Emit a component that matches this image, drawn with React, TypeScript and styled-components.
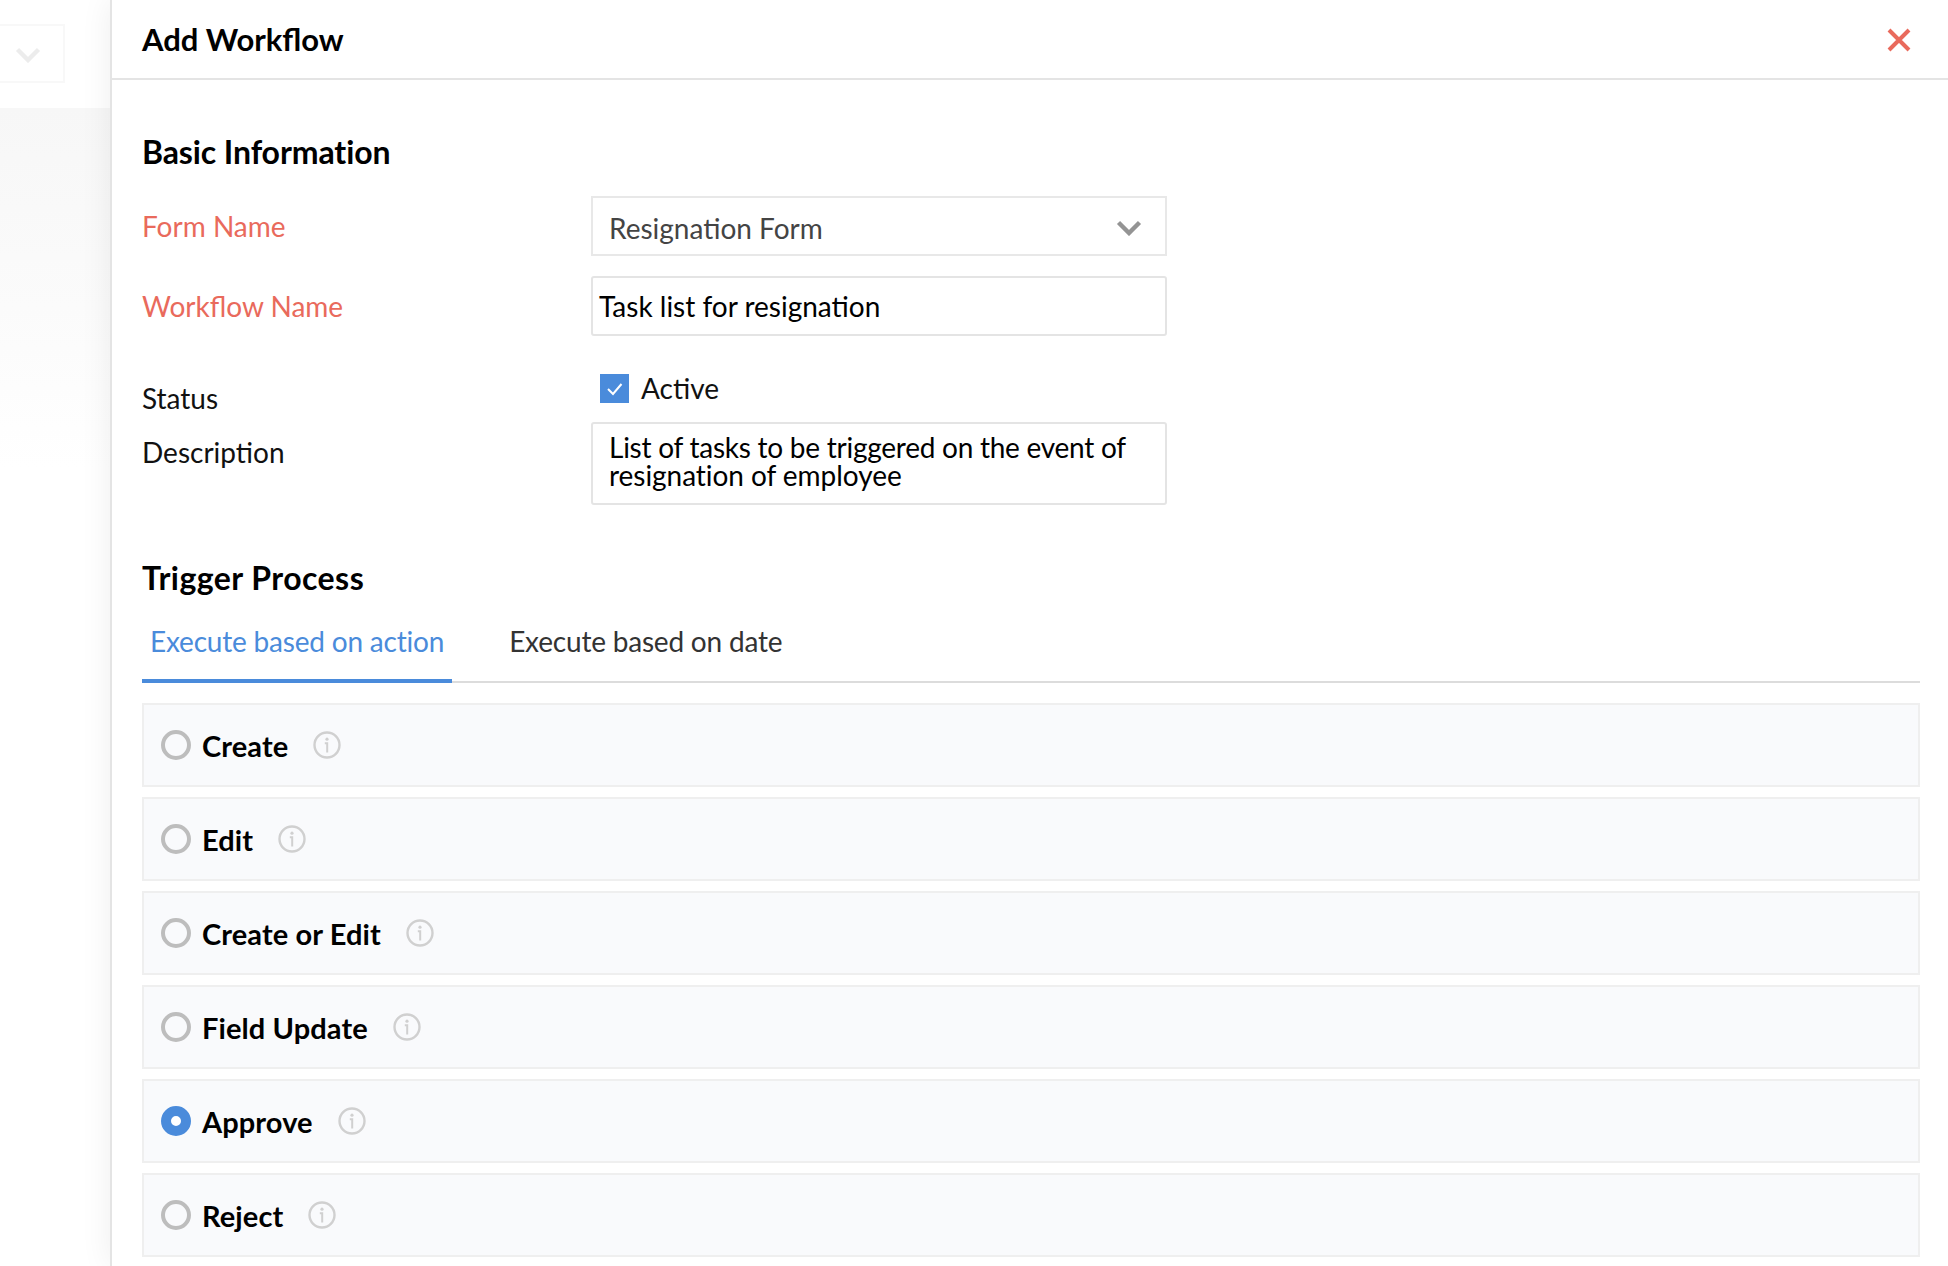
import React from "react";
import styled, { createGlobalStyle } from "styled-components";

const GlobalStyle = createGlobalStyle`
  html, body {
    margin: 0;
    padding: 0;
    background: #fff;
    font-family: Lato, "Liberation Sans", sans-serif;
  }
`;

const triggers = [
  { name: "Create" },
  { name: "Edit" },
  { name: "Create or Edit" },
  { name: "Field Update" },
  { name: "Approve", checked: true },
  { name: "Reject" },
];

const InfoIcon = () => (
  <svg width="28" height="28" viewBox="0 0 28 28" fill="none">
    <circle cx="14" cy="14" r="12.5" stroke="#d0d0d0" strokeWidth="2.4" />
    <circle cx="14" cy="8.2" r="1.6" fill="#d0d0d0" />
    <path d="M11.8 12.2h2.4v9.2" stroke="#d0d0d0" strokeWidth="2" />
  </svg>
);

const Chevron = ({ color }: { color: string }) => (
  <svg width="26" height="16" viewBox="0 0 26 16" fill="none">
    <path d="M2.5 2.5L13 13L23.5 2.5" stroke={color} strokeWidth="4.4" />
  </svg>
);

const App = () => {
  return (
    <Page>
      <GlobalStyle />
      <Backdrop>
        <BackdropTop>
          <GhostSelect>
            <Chevron color="#ececec" />
          </GhostSelect>
        </BackdropTop>
        <BackdropRest />
      </Backdrop>
      <Panel>
        <Header>
          <HeaderTitle>Add Workflow</HeaderTitle>
          <CloseIcon width="24" height="24" viewBox="0 0 24 24" fill="none">
            <path d="M2 2L22 22M22 2L2 22" stroke="#e96a5c" strokeWidth="4" />
          </CloseIcon>
        </Header>
        <Body>
          <SectionTitle>Basic Information</SectionTitle>
          <FormRow>
            <Label $required>Form Name</Label>
            <SelectBox>
              <span>Resignation Form</span>
              <Chevron color="#949494" />
            </SelectBox>
          </FormRow>
          <FormRow $top={20}>
            <Label $required>Workflow Name</Label>
            <TextBox>Task list for resignation</TextBox>
          </FormRow>
          <StatusRow>
            <StatusLabel>Status</StatusLabel>
            <CheckRow>
              <CheckBox>
                <svg width="17" height="14" viewBox="0 0 17 14" fill="none">
                  <path d="M2 7l5 5L15.5 2" stroke="#fff" strokeWidth="2" />
                </svg>
              </CheckBox>
              <CheckLabel>Active</CheckLabel>
            </CheckRow>
          </StatusRow>
          <FormRow $top={19}>
            <Label>Description</Label>
            <AreaBox>
              <AreaLine>List of tasks to be triggered on the event of</AreaLine>
              <AreaLine $wide>resignation of employee</AreaLine>
            </AreaBox>
          </FormRow>
          <TriggerTitle>Trigger Process</TriggerTitle>
          <Tabs>
            <Tab $active>Execute based on action</Tab>
            <Tab>Execute based on date</Tab>
          </Tabs>
          <TriggerList>
            {triggers.map((item) => (
              <TriggerRow key={item.name}>
                <Radio $checked={item.checked} />
                <TriggerName>{item.name}</TriggerName>
                <InfoIcon />
              </TriggerRow>
            ))}
          </TriggerList>
        </Body>
      </Panel>
    </Page>
  );
};

export default App;

const Page = styled.div`
  display: flex;
  width: 1948px;
  height: 1266px;
  overflow: hidden;
  background: #fff;
`;

const Backdrop = styled.div`
  width: 110px;
  flex-shrink: 0;
  display: flex;
  flex-direction: column;
`;

const BackdropTop = styled.div`
  height: 108px;
  flex-shrink: 0;
  background: #fff;
`;

const GhostSelect = styled.div`
  width: 65px;
  height: 59px;
  margin-top: 24px;
  box-sizing: border-box;
  border: 2px solid #f8f8f8;
  border-left: none;
  display: flex;
  align-items: center;
  padding-left: 15px;
  padding-top: 2px;
`;

const BackdropRest = styled.div`
  flex: 1;
  background: linear-gradient(to bottom, #f7f7f7 0, #fbfbfb 200px, #fff 360px);
`;

const Panel = styled.div`
  flex: 1;
  border-left: 2px solid #e4e4e4;
  background: #fff;
  box-shadow: 0 0 30px rgba(0, 0, 0, 0.07);
`;

const Header = styled.div`
  height: 78px;
  border-bottom: 2px solid #e4e4e4;
  display: flex;
  align-items: center;
  justify-content: space-between;
  padding: 0 37px 0 30px;
`;

const HeaderTitle = styled.div`
  font-size: 31px;
  font-weight: 700;
  color: #000;
`;

const CloseIcon = styled.svg`
  margin-top: 2px;
`;

const Body = styled.div`
  padding: 54px 28px 0 30px;
`;

const SectionTitle = styled.div`
  font-size: 32px;
  font-weight: 700;
  line-height: 36px;
  letter-spacing: -0.1px;
  color: #000;
  margin-bottom: 26px;
`;

const TriggerTitle = styled(SectionTitle)`
  margin-top: 55px;
  margin-bottom: 0;
  letter-spacing: 0.45px;
`;

const FormRow = styled.div<{ $top?: number }>`
  display: grid;
  grid-template-columns: 449px 576px;
  margin-top: ${(p) => p.$top || 0}px;
`;

const StatusRow = styled(FormRow)`
  height: 29px;
  margin-top: 38px;
`;

const Label = styled.div<{ $required?: boolean }>`
  font-size: 28px;
  line-height: 36px;
  padding-top: 12px;
  color: ${(p) => (p.$required ? "#e96a5c" : "#111")};
`;

const StatusLabel = styled.div`
  font-size: 28px;
  line-height: 29px;
  padding-top: 10px;
  color: #111;
`;

const SelectBox = styled.div`
  height: 60px;
  box-sizing: border-box;
  border: 2px solid #e8e8e8;
  display: flex;
  align-items: center;
  justify-content: space-between;
  padding: 3px 23px 0 16px;
  font-size: 28px;
  color: #444;
`;

const TextBox = styled.div`
  height: 60px;
  box-sizing: border-box;
  border: 2px solid #e4e4e4;
  border-radius: 3px;
  display: flex;
  align-items: center;
  padding: 0 6px;
  font-size: 28px;
  color: #000;
`;

const CheckRow = styled.div`
  display: flex;
  align-items: center;
  height: 29px;
  padding-left: 9px;
`;

const CheckBox = styled.div`
  width: 29px;
  height: 29px;
  background: #4a8bdb;
  display: flex;
  align-items: center;
  justify-content: center;
  margin-right: 12px;
`;

const CheckLabel = styled.div`
  font-size: 28px;
  line-height: 29px;
  color: #111;
`;

const AreaBox = styled.div`
  height: 83px;
  box-sizing: border-box;
  border: 2px solid #e4e4e4;
  border-radius: 3px;
  padding: 9px 16px 0;
  font-size: 28px;
  line-height: 28px;
  color: #000;
`;

const AreaLine = styled.div<{ $wide?: boolean }>`
  letter-spacing: ${(p) => (p.$wide ? "-0.05px" : "-0.25px")};
`;

const Tabs = styled.div`
  display: flex;
  gap: 49px;
  height: 87px;
  box-sizing: border-box;
  border-bottom: 2px solid #dcdcdc;
`;

const Tab = styled.div<{ $active?: boolean }>`
  height: 87px;
  box-sizing: border-box;
  padding: 27px 8px 0;
  font-size: 28px;
  line-height: 36px;
  letter-spacing: -0.2px;
  color: ${(p) => (p.$active ? "#4a8bdb" : "#333")};
  border-bottom: ${(p) => (p.$active ? "4px solid #4a8bdb" : "none")};
`;

const TriggerList = styled.div`
  display: flex;
  flex-direction: column;
  gap: 10px;
  margin-top: 20px;
`;

const TriggerRow = styled.div`
  height: 84px;
  box-sizing: border-box;
  border: 2px solid #efefef;
  background: #f9fafc;
  display: flex;
  align-items: center;
  padding-left: 17px;
`;

const Radio = styled.div<{ $checked?: boolean }>`
  width: 30px;
  height: 30px;
  box-sizing: border-box;
  border-radius: 50%;
  background: ${(p) => (p.$checked ? "#fff" : "transparent")};
  border: ${(p) => (p.$checked ? "10px solid #4a8bdb" : "4.5px solid #bdbdbd")};
`;

const TriggerName = styled.div`
  font-size: 29px;
  font-weight: 700;
  letter-spacing: 0.1px;
  color: #000;
  margin: 0 25px 0 11px;
`;
